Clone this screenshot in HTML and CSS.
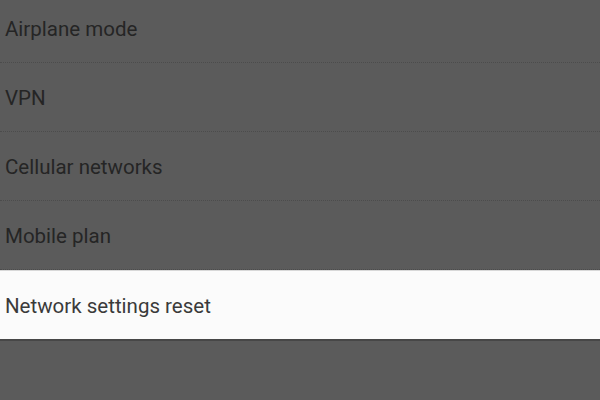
FILE: index.html
```html
<!DOCTYPE html>
<html lang="en">
<head>
  <meta charset="UTF-8">
  <title>Network settings</title>
  <link rel="stylesheet" href="styles.css">
</head>
<body>
  <ul class="settings-list">
    <li class="setting-row">Airplane mode</li>
    <li class="setting-row">VPN</li>
    <li class="setting-row">Cellular networks</li>
    <li class="setting-row">Mobile plan</li>
    <li class="setting-row highlighted">Network settings reset</li>
  </ul>
</body>
</html>
```

FILE: styles.css
```css
body {
  margin: 0;
  background-color: #5b5b5b;
  font-family: Roboto, "Noto Sans", sans-serif;
  overflow: hidden;
}

.settings-list {
  list-style: none;
  margin: -6px 0 0 0;
  padding: 0;
}

.setting-row {
  height: 66px;
  padding-top: 2px;
  display: flex;
  align-items: center;
  padding-left: 5px;
  font-size: 20.5px;
  color: #252525;
  border-bottom: 1px dotted #4c4c4c;
}

.highlighted {
  background-color: #fbfbfb;
  color: #3a3a3a;
  border-top: 1px solid #d8d8d8;
  border-bottom: 2px solid #474747;
  height: 66px;
  padding-top: 2px;
}
```
